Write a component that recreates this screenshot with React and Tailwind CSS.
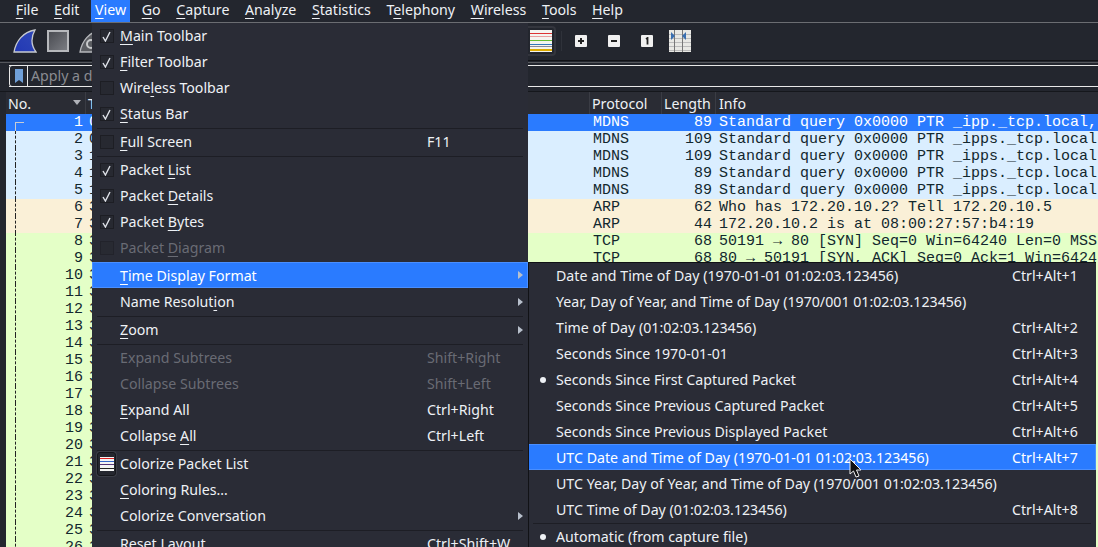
import React from "react";

const ui = "font-['Noto_Sans',sans-serif]";

function Label({ text, m }) {
  if (m === undefined || m < 0) return <span>{text}</span>;
  return (
    <span>
      {text.slice(0, m)}
      <span className="underline underline-offset-[3px]">{text[m]}</span>
      {text.slice(m + 1)}
    </span>
  );
}

const menus = [
  ["File", 0], ["Edit", 0], ["View", 0], ["Go", 0], ["Capture", 0], ["Analyze", 0],
  ["Statistics", 0], ["Telephony", 1], ["Wireless", 0], ["Tools", 0], ["Help", 0],
];

const rows = [
  ["1", "0", "MDNS", "89", "Standard query 0x0000 PTR _ipp._tcp.local,", "sel"],
  ["2", "0", "MDNS", "109", "Standard query 0x0000 PTR _ipps._tcp.local", "b"],
  ["3", "1", "MDNS", "109", "Standard query 0x0000 PTR _ipps._tcp.local", "b"],
  ["4", "1", "MDNS", "89", "Standard query 0x0000 PTR _ipps._tcp.local", "b"],
  ["5", "1", "MDNS", "89", "Standard query 0x0000 PTR _ipps._tcp.local", "b"],
  ["6", "3", "ARP", "62", "Who has 172.20.10.2? Tell 172.20.10.5", "o"],
  ["7", "3", "ARP", "44", "172.20.10.2 is at 08:00:27:57:b4:19", "o"],
  ["8", "3", "TCP", "68", "50191 → 80 [SYN] Seq=0 Win=64240 Len=0 MSS", "g"],
  ["9", "3", "TCP", "68", "80 → 50191 [SYN, ACK] Seq=0 Ack=1 Win=6424", "g"],
];
for (let i = 10; i <= 26; i++) rows.push([String(i), "3", "", "", "", "g"]);

const rowBg = {
  sel: "bg-[#2a7bff] text-white",
  b: "bg-[#daeeff] text-[#12272e]",
  o: "bg-[#faf0d7] text-[#12272e]",
  g: "bg-[#e4ffc7] text-[#12272e]",
};

function Check({ on, dim }) {
  return (
    <span className={"ml-px w-[14px] h-[14px] flex items-center justify-center bg-[#272931] border border-[#1d1e24] " + (dim ? "opacity-60" : "")}>
      {on && (
        <svg width="9" height="11" viewBox="0 0 9 11" fill="none">
          <path d="M1 6 L3.4 10 L8 1" stroke="#dfe2e8" strokeWidth="1.4" />
        </svg>
      )}
    </span>
  );
}

function Arrow() {
  return (
    <svg width="5" height="8" viewBox="0 0 5 8" className="absolute right-[5px] top-[9px]">
      <path d="M0 0 L5 4 L0 8 Z" fill="#b8c0cc" />
    </svg>
  );
}

function Item({ text, m, check, on, dis, sel, arrow, short, icon }) {
  return (
    <div className={"relative h-[26px] flex items-center " + (sel ? "pt-[2px] bg-[#2a7bff] text-white shadow-[inset_0_0_0_1px_#4a8fff] " : "") + (dis ? "text-[#696b74] " : "")}>
      <span className="w-[28px] shrink-0 flex items-center justify-center">
        {check && <Check on={on} dim={dis} />}
        {icon && <ColorizeIcon />}
      </span>
      <span className="whitespace-nowrap"><Label text={text} m={m} /></span>
      {short && <span className="absolute left-[335px] whitespace-nowrap">{short}</span>}
      {arrow && <Arrow />}
    </div>
  );
}

function ColorizeIcon() {
  return (
    <span className="ml-px w-[19px] h-[24px] flex items-center justify-center rounded-[3px] border border-[#15161b] bg-[#25272f] shadow-[0_0_0_1px_#3a3c45]">
      <svg width="14" height="14" viewBox="0 0 14 14">
        <rect width="14" height="14" fill="#f4f4f4" />
        <rect y="1" width="14" height="1" fill="#d22" />
        <rect y="4" width="14" height="1" fill="#36c" />
        <rect y="7" width="14" height="1" fill="#537" />
        <rect y="11" width="14" height="1" fill="#222" />
      </svg>
    </span>
  );
}

function Sep() {
  return <div className="h-[2px] flex items-center pl-[5px] pr-[5px]"><div className="h-px w-full bg-[#1d1e25]" /></div>;
}

function ViewMenu() {
  return (
    <div className={"absolute left-[92px] top-[23px] w-[436px] h-[524px] overflow-hidden bg-[#2a2c36] text-[#eef1f5] text-[14.2px] " + ui}>
      <Item text="Main Toolbar" m={0} check on />
      <Item text="Filter Toolbar" m={0} check on />
      <Item text="Wireless Toolbar" m={4} check />
      <Item text="Status Bar" m={0} check on />
      <Sep />
      <Item text="Full Screen" m={0} check short="F11" />
      <Sep />
      <Item text="Packet List" m={7} check on />
      <Item text="Packet Details" m={7} check on />
      <Item text="Packet Bytes" m={7} check on />
      <Item text="Packet Diagram" m={7} check dis />
      <div className="h-px" />
      <Item text="Time Display Format" m={0} sel arrow />
      <div className="h-px" />
      <Item text="Name Resolution" m={12} arrow />
      <Sep />
      <Item text="Zoom" m={0} arrow />
      <Sep />
      <Item text="Expand Subtrees" dis short="Shift+Right" />
      <Item text="Collapse Subtrees" dis short="Shift+Left" />
      <Item text="Expand All" m={0} short="Ctrl+Right" />
      <Item text="Collapse All" m={9} short="Ctrl+Left" />
      <Sep />
      <Item text="Colorize Packet List" icon />
      <Item text="Coloring Rules…" m={0} />
      <Item text="Colorize Conversation" arrow />
      <Sep />
      <Item text="Reset Layout" short="Ctrl+Shift+W" />
    </div>
  );
}

function Bullet() {
  return <span className="absolute left-[12px] top-[11px] w-[6px] h-[6px] rounded-full bg-[#eef1f5]" />;
}

function SubMenu() {
  const items = [
    ["Date and Time of Day (1970-01-01 01:02:03.123456)", "Ctrl+Alt+1"],
    ["Year, Day of Year, and Time of Day (1970/001 01:02:03.123456)"],
    ["Time of Day (01:02:03.123456)", "Ctrl+Alt+2"],
    ["Seconds Since 1970-01-01", "Ctrl+Alt+3"],
    ["Seconds Since First Captured Packet", "Ctrl+Alt+4", true],
    ["Seconds Since Previous Captured Packet", "Ctrl+Alt+5"],
    ["Seconds Since Previous Displayed Packet", "Ctrl+Alt+6"],
    ["UTC Date and Time of Day (1970-01-01 01:02:03.123456)", "Ctrl+Alt+7", false, true],
    ["UTC Year, Day of Year, and Time of Day (1970/001 01:02:03.123456)"],
    ["UTC Time of Day (01:02:03.123456)", "Ctrl+Alt+8"],
  ];
  return (
    <div className={"absolute left-[528px] top-[262px] w-[568px] h-[285px] overflow-hidden bg-[#2a2c36] border-t border-l border-[#111216] text-[#eef1f5] text-[14.2px] " + ui}>
      <div className="-mt-px -ml-px">
        {items.map(([t, s, b, sel]) => (
          <div key={t} className={"relative h-[26px] pt-[2px] flex items-center pl-[28px] whitespace-nowrap " + (sel ? "bg-[#2a7bff] text-white shadow-[inset_0_0_0_1px_#4a8fff]" : "")}>
            {b && <Bullet />}
            <span>{t}</span>
            {s && <span className="absolute left-[484px]">{s}</span>}
          </div>
        ))}
        <Sep />
        <div className="relative h-[26px] flex items-center pl-[28px] whitespace-nowrap">
          <span className="absolute left-[12px] top-[10px] w-[6px] h-[6px] rounded-full bg-[#eef1f5]" />
          <span>Automatic (from capture file)</span>
        </div>
      </div>
    </div>
  );
}

function Cursor() {
  return (
    <svg width="14" height="21" viewBox="0 0 14 21" className="absolute left-[849px] top-[458px]">
      <path d="M1 1 L1 16 L4.5 13 L7 19 L10 18 L7.5 12 L12 12 Z" fill="#111" stroke="#eee" strokeWidth="1" />
    </svg>
  );
}

function Fin({ fill, stroke, cog }) {
  return (
    <svg width="24" height="24" viewBox="0 0 24 24">
      <defs>
        <linearGradient id="finb" x1="1" y1="0" x2="0" y2="1">
          <stop offset="0" stopColor="#3048b8" />
          <stop offset="1" stopColor="#2238b4" />
        </linearGradient>
      </defs>
      <path d="M1 23 C3 12 10 3 22 1 C18 8 18 16 23 23 Z" fill={fill} stroke={stroke} strokeWidth="1.3" />
      {cog && <circle cx="12" cy="15" r="4" fill="none" stroke="#c8cacc" strokeWidth="2" />}
    </svg>
  );
}

function SquareBtn({ glyph }) {
  return (
    <span className="w-[12px] h-[12px] rounded-[1px] bg-[#f0f0f0] flex items-center justify-center">
      {glyph}
    </span>
  );
}

function Toolbar() {
  return (
    <div className="h-[38px] pb-px flex items-center bg-[#23262e] border-b border-[#111216]">
      <div className="w-[528px] flex items-center pl-[13px] gap-[10px]">
        <Fin fill="url(#finb)" stroke="#c8cbd0" />
        <span className="w-[22px] h-[22px] border-[2px] border-[#b6b8bc] bg-gradient-to-br from-[#4a4c52] to-[#7a7c82]" />
        <Fin fill="#5b5d62" stroke="#b6b8bc" cog />
      </div>
      <div className="flex items-center">
        <span className="w-[28px] h-[30px] flex items-center justify-center rounded-r-[4px] border-2 border-[#33353d] border-l-0">
          <svg width="22" height="22" viewBox="0 0 22 22">
            <rect width="22" height="22" fill="#f4f4f0" />
            <rect y="3" width="22" height="1" fill="#d33" />
            <rect y="6" width="22" height="1" fill="#e8a0a0" />
            <rect y="10" width="22" height="1" fill="#6b3" />
            <rect y="14" width="22" height="1" fill="#37b" />
            <rect y="16" width="22" height="1" fill="#889" />
            <rect y="19" width="22" height="2" fill="#da0" />
          </svg>
        </span>
        <span className="w-px h-[20px] bg-[#2f323a] ml-[5px] mr-[13px]" />
        <SquareBtn glyph={<svg width="8" height="8" viewBox="0 0 8 8"><path d="M4 1v6M1 4h6" stroke="#222" strokeWidth="2" /></svg>} />
        <span className="w-[21px]" />
        <SquareBtn glyph={<svg width="8" height="8" viewBox="0 0 8 8"><path d="M1 4h6" stroke="#222" strokeWidth="2" /></svg>} />
        <span className="w-[21px]" />
        <SquareBtn glyph={<svg width="8" height="8" viewBox="0 0 8 8"><path d="M3 2l1.5-1v6.5" stroke="#222" strokeWidth="1.8" fill="none" /></svg>} />
        <span className="w-[16px]" />
        <svg width="22" height="22" viewBox="0 0 22 22">
          <rect width="22" height="22" fill="#e8e8e4" />
          <path d="M0 4.5h22M0 8.5h22M0 12.5h22M0 16.5h22M0 20.5h22" stroke="#bbb" strokeWidth="1" />
          <path d="M5.5 0v22M13.5 0v22" stroke="#777" strokeWidth="1" />
          <path d="M2 2v8l4-4Z M17 2v8l-4-4Z" fill="#3a6fb0" />
        </svg>
      </div>
    </div>
  );
}

export default function App() {
  return (
    <div className={"relative w-[1098px] h-[547px] overflow-hidden bg-[#23262e] " + ui}>
      <div className="h-[22px] flex items-center pl-[8px] text-[14.2px] text-[#eef1f5] border-b border-[#6b6d72] box-content">
        {menus.map(([t, m]) => (
          <span key={t} className={"h-[22px] pb-[2px] px-[4px] mx-[3.8px] flex items-center " + (t === "View" ? "bg-[#2a7bff] text-white" : "")}>
            <Label text={t} m={m} />
          </span>
        ))}
      </div>
      <Toolbar />
      <div className="h-px mt-px bg-[#55575c]" />
      <div className="h-[22px] mt-[2px] ml-[9px] flex items-center border-y border-[#e8e8e8]">
        <span className="w-[19px] h-[22px] rounded-l-[3px] border border-[#e8e8e8] flex items-center justify-center">
          <svg width="8" height="14" viewBox="0 0 8 14"><path d="M0 0h8v14l-4-3-4 3Z" fill="#6f9fd8" /></svg>
        </span>
        <span className="pl-[3px] text-[14.2px] text-[#8a8c92]">Apply a display filter …</span>
      </div>
      <div className="h-px mt-[4px] bg-[#15171c]" />
      <div className="h-[22px] ml-[6px] flex items-center text-[14.2px] text-[#eef1f5] bg-[#2a2c34] relative">
        <span className="w-[79px] pl-[2px] pt-px">No.</span>
        <svg width="8" height="5" className="absolute left-[67px] top-[8px]"><path d="M0 0h8L4 5Z" fill="#b0b2b8" /></svg>
        <span className="w-[504px] pl-[2px] pt-px border-l border-[#3a3c44]">Time</span>
        <span className="w-[72px] pl-[2px] pt-px border-l border-[#3a3c44]">Protocol</span>
        <span className="w-[54px] pl-[2px] pt-px border-l border-[#3a3c44]">Length</span>
        <span className="pl-[3px] pt-px border-l border-[#3a3c44]">Info</span>
      </div>
      <div className="ml-[6px] font-['Liberation_Mono',monospace] text-[15px]">
        {rows.map(([n, t, p, l, i, c]) => (
          <div key={n} className={"relative h-[17px] leading-[17px] flex whitespace-nowrap " + rowBg[c]}>
            <span className="w-[77px] text-right shrink-0">{n}</span>
            <span className="w-[510px] pl-[6px] shrink-0">{t}</span>
            <span className="w-[82px] shrink-0">{p}</span>
            <span className="w-[37px] text-right shrink-0">{l}</span>
            <span className="pl-[7px]">{i}</span>
            {n === "1"
              ? <span className="absolute left-[9px] top-[8px] w-[9px] h-[9px] border-t border-l border-[#c8ccd4]" />
              : <span className="absolute left-[9px] top-0 h-[17px] border-l border-dashed border-[#222]" />}
          </div>
        ))}
      </div>
      <ViewMenu />
      <SubMenu />
      <Cursor />
    </div>
  );
}
